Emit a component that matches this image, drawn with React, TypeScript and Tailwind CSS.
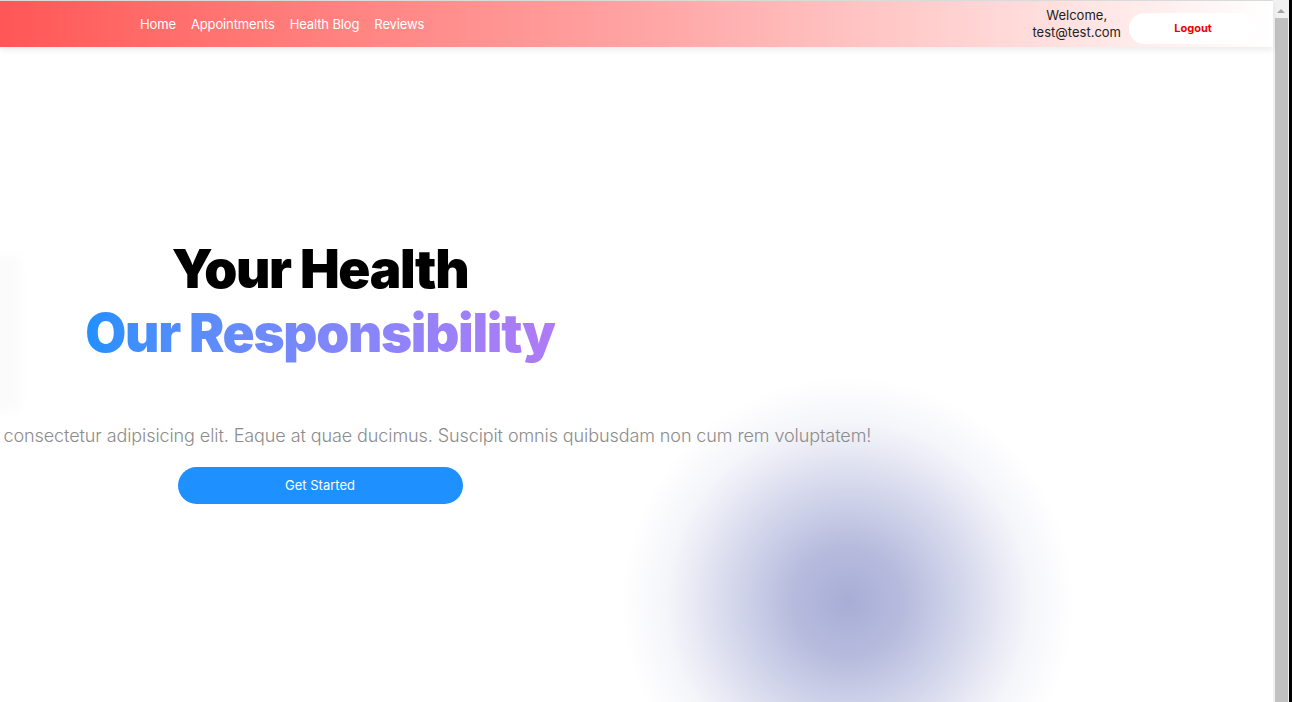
import React from 'react';

const navLinks = ['Home', 'Appointments', 'Health Blog', 'Reviews'];

const Header: React.FC = () => (
  <header className="relative z-10 h-[46px] flex items-stretch bg-gradient-to-r from-[#ff5656] via-[#ffa3a3] to-[#ffffff] shadow-[0_3px_6px_rgba(0,0,0,0.08)]">
    <nav className="flex items-center gap-[15px] pl-[140px] text-[13px] tracking-[-0.01em] text-white">
      {navLinks.map((l) => (
        <a key={l} href="#" className="leading-none">{l}</a>
      ))}
    </nav>
    <div className="ml-auto flex items-center gap-[8px] pr-[16px]">
      <div className="text-center text-[13px] leading-[17px] text-[#222]">
        <div>Welcome,</div>
        <div>test@test.com</div>
      </div>
      <button className="mt-[8px] h-[31px] w-[128px] rounded-full bg-white text-[11px] font-bold text-[#ee0000]">Logout</button>
    </div>
  </header>
);

const Hero: React.FC = () => (
  <section className="relative flex-1 overflow-hidden">
    {/* faint shape on the left edge */}
    <div className="absolute left-[-10px] top-[208px] h-[156px] w-[30px] rounded-md bg-[#fbfbfb] blur-[5px]" />
    {/* soft lavender blob */}
    <div className="absolute left-[622px] top-[330px] h-[450px] w-[452px] bg-[radial-gradient(closest-side,rgba(168,173,214,1)_0%,rgba(170,176,216,0.85)_25%,rgba(170,176,216,0.45)_55%,rgba(170,176,216,0.12)_80%,rgba(170,176,216,0)_100%)]" />

    <div className="relative w-[640px] pt-[190px] flex flex-col items-center">
      <h1 className="text-center font-black tracking-[-0.025em] leading-[64px] text-[53px]">
        <span className="block text-black">Your Health</span>
        <span className="block bg-gradient-to-r from-[#1e90ff] to-[#b07af6] bg-clip-text text-transparent">Our Responsibility</span>
      </h1>
      <p className="mt-[57px] whitespace-nowrap text-[18px] font-light tracking-[-0.005em] text-[#8c8c8c]">
        Lorem ipsum dolor sit amet, consectetur adipisicing elit. Eaque at quae ducimus. Suscipit omnis quibusdam non cum rem voluptatem!
      </p>
      <button className="mt-[18px] h-[37px] w-[285px] rounded-full bg-[#1e90ff] text-[13px] text-white">Get Started</button>
    </div>
  </section>
);

const FakeScrollbar: React.FC = () => (
  <div className="flex w-[19px] shrink-0">
    <div className="flex w-[16px] flex-col items-center bg-[#f1f1f1]">
      <div className="mt-[9px] h-0 w-0 border-x-[4px] border-b-[4px] border-x-transparent border-b-[#a3a3a3]" />
      <div className="mt-[5px] w-[13px] flex-1 bg-[#c1c1c1]" />
    </div>
    <div className="w-[3px] bg-black" />
  </div>
);

export default function App() {
  return (
    <div className="flex h-[702px] w-full overflow-hidden bg-white font-['Inter',sans-serif]">
      <div className="flex flex-1 flex-col border-t border-[#dcdcdc]">
        <Header />
        <Hero />
      </div>
      <FakeScrollbar />
    </div>
  );
}
